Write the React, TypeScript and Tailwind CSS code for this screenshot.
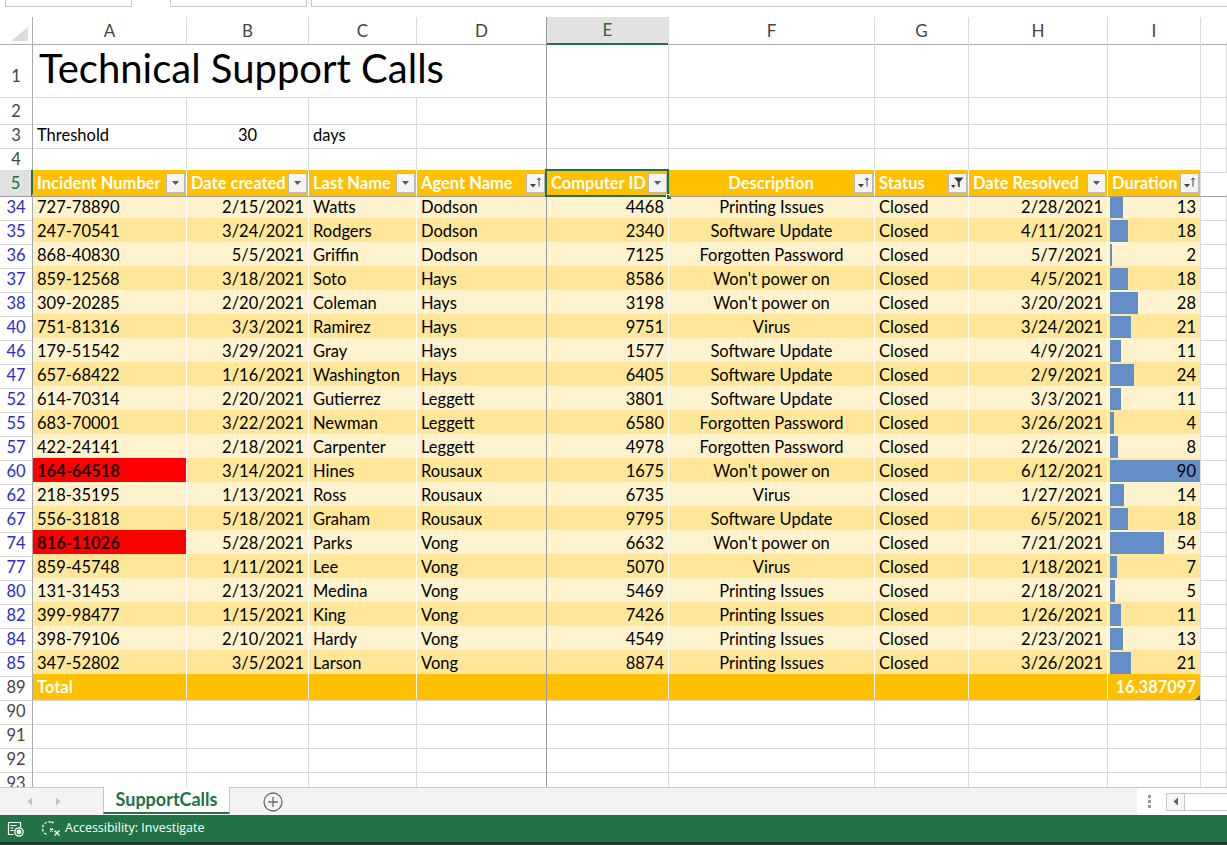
import { clsx } from 'clsx'

type Call = {
  n: number
  id: string
  created: string
  last: string
  agent: string
  comp: number
  desc: string
  resolved: string
  dur: number
  flag?: boolean
}

const CALLS: Call[] = [
  { n: 34, id: '727-78890', created: '2/15/2021', last: 'Watts', agent: 'Dodson', comp: 4468, desc: 'Printing Issues', resolved: '2/28/2021', dur: 13 },
  { n: 35, id: '247-70541', created: '3/24/2021', last: 'Rodgers', agent: 'Dodson', comp: 2340, desc: 'Software Update', resolved: '4/11/2021', dur: 18 },
  { n: 36, id: '868-40830', created: '5/5/2021', last: 'Griffin', agent: 'Dodson', comp: 7125, desc: 'Forgotten Password', resolved: '5/7/2021', dur: 2 },
  { n: 37, id: '859-12568', created: '3/18/2021', last: 'Soto', agent: 'Hays', comp: 8586, desc: "Won't power on", resolved: '4/5/2021', dur: 18 },
  { n: 38, id: '309-20285', created: '2/20/2021', last: 'Coleman', agent: 'Hays', comp: 3198, desc: "Won't power on", resolved: '3/20/2021', dur: 28 },
  { n: 40, id: '751-81316', created: '3/3/2021', last: 'Ramirez', agent: 'Hays', comp: 9751, desc: 'Virus', resolved: '3/24/2021', dur: 21 },
  { n: 46, id: '179-51542', created: '3/29/2021', last: 'Gray', agent: 'Hays', comp: 1577, desc: 'Software Update', resolved: '4/9/2021', dur: 11 },
  { n: 47, id: '657-68422', created: '1/16/2021', last: 'Washington', agent: 'Hays', comp: 6405, desc: 'Software Update', resolved: '2/9/2021', dur: 24 },
  { n: 52, id: '614-70314', created: '2/20/2021', last: 'Gutierrez', agent: 'Leggett', comp: 3801, desc: 'Software Update', resolved: '3/3/2021', dur: 11 },
  { n: 55, id: '683-70001', created: '3/22/2021', last: 'Newman', agent: 'Leggett', comp: 6580, desc: 'Forgotten Password', resolved: '3/26/2021', dur: 4 },
  { n: 57, id: '422-24141', created: '2/18/2021', last: 'Carpenter', agent: 'Leggett', comp: 4978, desc: 'Forgotten Password', resolved: '2/26/2021', dur: 8 },
  { n: 60, id: '164-64518', created: '3/14/2021', last: 'Hines', agent: 'Rousaux', comp: 1675, desc: "Won't power on", resolved: '6/12/2021', dur: 90, flag: true },
  { n: 62, id: '218-35195', created: '1/13/2021', last: 'Ross', agent: 'Rousaux', comp: 6735, desc: 'Virus', resolved: '1/27/2021', dur: 14 },
  { n: 67, id: '556-31818', created: '5/18/2021', last: 'Graham', agent: 'Rousaux', comp: 9795, desc: 'Software Update', resolved: '6/5/2021', dur: 18 },
  { n: 74, id: '816-11026', created: '5/28/2021', last: 'Parks', agent: 'Vong', comp: 6632, desc: "Won't power on", resolved: '7/21/2021', dur: 54, flag: true },
  { n: 77, id: '859-45748', created: '1/11/2021', last: 'Lee', agent: 'Vong', comp: 5070, desc: 'Virus', resolved: '1/18/2021', dur: 7 },
  { n: 80, id: '131-31453', created: '2/13/2021', last: 'Medina', agent: 'Vong', comp: 5469, desc: 'Printing Issues', resolved: '2/18/2021', dur: 5 },
  { n: 82, id: '399-98477', created: '1/15/2021', last: 'King', agent: 'Vong', comp: 7426, desc: 'Printing Issues', resolved: '1/26/2021', dur: 11 },
  { n: 84, id: '398-79106', created: '2/10/2021', last: 'Hardy', agent: 'Vong', comp: 4549, desc: 'Printing Issues', resolved: '2/23/2021', dur: 13 },
  { n: 85, id: '347-52802', created: '3/5/2021', last: 'Larson', agent: 'Vong', comp: 8874, desc: 'Printing Issues', resolved: '3/26/2021', dur: 21 },
]

const GRID = 'grid grid-cols-[33px_154px_122px_108px_130px_122px_206px_94px_139px_93px_1fr]'
const LETTERS = ['A', 'B', 'C', 'D', 'E', 'F', 'G', 'H', 'I', '']

// cell border helpers
const CELL = 'flex min-w-0 items-center whitespace-nowrap border-b border-r px-[4px] pt-px'
const GRID_B = 'border-b-[#dadada]'
const GRID_R = 'border-r-[#dadada]'
const FREEZE_R = 'border-r-[#9c9c9c]'

function RowHead({ n, blue = false, active = false, bottom = false }: { n: number; blue?: boolean; active?: boolean; bottom?: boolean }) {
  return (
    <div
      className={clsx(
        'flex justify-center border-b border-r text-[16.5px]',
        bottom ? 'items-end pb-[8px]' : 'items-center pt-px',
        active ? 'border-r-2 border-r-[#217346] border-b-[#9c9c9c] bg-[#e1e1e1] text-[#1e6b3f]' : 'border-r-[#ababab] border-b-[#dadada]',
        !active && (blue ? 'text-[#2b2bd4]' : 'text-[#444]'),
      )}
    >
      {n}
    </div>
  )
}

function Blank({ col }: { col: number }) {
  return <div className={clsx('border-b border-r', GRID_B, col === 3 ? FREEZE_R : GRID_R)} />
}

function EmptyRow({ n }: { n: number }) {
  return (
    <div className={clsx(GRID, 'h-6')}>
      <RowHead n={n} />
      {LETTERS.map((_, i) => (
        <Blank key={i} col={i} />
      ))}
    </div>
  )
}

function DropIcon() {
  return (
    <svg width="9" height="6" viewBox="0 0 9 6">
      <path d="M1 1h7L4.5 5z" fill="#595959" />
    </svg>
  )
}

function SortIcon() {
  return (
    <svg width="15" height="15" viewBox="0 0 15 15">
      <path d="M2 9h6l-3 3.5z" fill="#444" />
      <path d="M11 3v8.5M9.3 4.8L11 3l1.7 1.8" stroke="#444" strokeWidth="1" fill="none" />
    </svg>
  )
}

function FunnelIcon() {
  return (
    <svg width="15" height="15" viewBox="0 0 15 15">
      <path d="M4 2.5h9.5l-3.8 4.6v5.4L7.8 11.3V7.1z" fill="#3a3a3a" />
      <path d="M1 10h4.5L3.25 13z" fill="#3a3a3a" />
    </svg>
  )
}

function FilterBtn({ kind = 'drop' }: { kind?: 'drop' | 'sort' | 'filter' }) {
  return (
    <span className="flex h-[20px] w-[19px] shrink-0 items-center justify-center border border-[#b9b9b9] bg-[#f4f4f4]">
      {kind === 'drop' && <DropIcon />}
      {kind === 'sort' && <SortIcon />}
      {kind === 'filter' && <FunnelIcon />}
    </span>
  )
}

function HeadCell({ label, kind, center = false, right = 'border-r-white', selected = false }: { label: string; kind?: 'drop' | 'sort' | 'filter'; center?: boolean; right?: string; selected?: boolean }) {
  return (
    <div className={clsx('relative grid items-center border-b border-r border-b-[#9c9c9c] bg-[#ffc000] pl-[4px] pr-[1px] text-[16.5px] font-bold whitespace-nowrap text-white', right)}>
      <span className={clsx('col-start-1 row-start-1 pt-px', center && 'justify-self-center pr-[4px]')}>{label}</span>
      <span className="col-start-1 row-start-1 justify-self-end">
        <FilterBtn kind={kind} />
      </span>
      {selected && (
        <>
          <div className="pointer-events-none absolute -top-px -bottom-px -left-[2px] -right-px border-2 border-[#217346]" />
          <div className="absolute -right-[4px] -bottom-[4px] h-[6px] w-[6px] border border-white bg-[#217346]" />
        </>
      )}
    </div>
  )
}

function DataRow({ r, i }: { r: Call; i: number }) {
  const bg = i % 2 === 0 ? 'bg-[#fff2cc]' : 'bg-[#ffe699]'
  const cell = clsx(CELL, 'border-b-white text-[16.5px]')
  return (
    <div className={clsx(GRID, 'h-6')}>
      <RowHead n={r.n} blue />
      <div className={clsx(cell, 'border-r-white', r.flag ? 'bg-[#ff0000] font-bold text-[#1a0000]' : clsx(bg, 'text-black'))}>{r.id}</div>
      <div className={clsx(cell, 'justify-end border-r-white text-black', bg)}>{r.created}</div>
      <div className={clsx(cell, 'border-r-white text-black', bg)}>{r.last}</div>
      <div className={clsx(cell, FREEZE_R, 'text-black', bg)}>{r.agent}</div>
      <div className={clsx(cell, 'justify-end border-r-white text-black', bg)}>{r.comp}</div>
      <div className={clsx(cell, 'justify-center border-r-white text-black', bg)}>{r.desc}</div>
      <div className={clsx(cell, 'border-r-white text-black', bg)}>Closed</div>
      <div className={clsx(cell, 'justify-end border-r-white text-black', bg)}>{r.resolved}</div>
      <div className={clsx('grid border-b border-r border-b-white text-[16.5px] text-black', GRID_R, bg)}>
        <div className="col-start-1 row-start-1 my-[2px] ml-[2px] bg-[#638ec6]" style={{ width: r.dur }} />
        <span className="col-start-1 row-start-1 self-center justify-self-end pt-px pr-[4px]">{r.dur}</span>
      </div>
      <Blank col={9} />
    </div>
  )
}

function SheetViewIcon() {
  return (
    <svg width="18" height="16" viewBox="0 0 18 16" fill="none" stroke="white" strokeWidth="1.2">
      <path d="M1.5 1.5h12v5" />
      <path d="M1.5 1.5v12h5" />
      <path d="M3.5 4.5h6M3.5 7h3M3.5 9.5h3" />
      <circle cx="12" cy="11" r="4.2" />
      <circle cx="12" cy="11" r="1.8" fill="white" />
    </svg>
  )
}

function AccessIcon() {
  return (
    <svg width="20" height="18" viewBox="0 0 20 18" fill="none" stroke="white" strokeWidth="1.3">
      <path d="M9 2.2A6.5 6.5 0 0 0 5 14.6" strokeDasharray="2.6 1.6" />
      <circle cx="10.5" cy="2.5" r="1.1" fill="white" stroke="none" />
      <path d="M8 8.5l3 3M11 8.5l-3 3" />
      <path d="M12.5 10.5l5 5M17.5 10.5l-5 5" />
    </svg>
  )
}

export default function App() {
  return (
    <div className="flex h-[845px] w-[1227px] flex-col overflow-hidden bg-white font-['Lato','Liberation_Sans',sans-serif]">
      {/* ── formula bar remnants ───────────────── */}
      <div className="flex h-[17px] shrink-0 items-start">
        <div className="ml-[5px] h-[7px] w-[127px] border-x border-b border-[#c6c6c6]" />
        <div className="ml-[38px] h-[7px] w-[137px] border-x border-b border-[#c6c6c6]" />
        <div className="ml-[4px] h-[7px] flex-1 border-l border-b border-[#c6c6c6]" />
      </div>

      {/* ── sheet ───────────────────────────────── */}
      <div className="h-[770px] shrink-0 overflow-hidden">
        {/* column letters */}
        <div className={clsx(GRID, 'h-[25px]')}>
          <div className="flex items-end justify-end border-b border-r border-b-[#ababab] border-r-[#ababab] pr-[3px] pb-[3px]">
            <svg width="18" height="14" viewBox="0 0 18 14">
              <path d="M17 0v14H0z" fill="#dcdcdc" />
            </svg>
          </div>
          {LETTERS.map((l, i) => (
            <div
              key={i}
              className={clsx(
                'flex items-center justify-center border-r text-[17px]',
                l === 'E' ? 'border-b-2 border-b-[#217346] bg-[#e1e1e1] text-[#1e6b3f]' : 'border-b border-b-[#ababab] text-[#444]',
                i === 3 ? FREEZE_R : GRID_R,
                i === 9 && 'border-r-0',
              )}
            >
              {l}
            </div>
          ))}
        </div>

        {/* row 1: title */}
        <div className={clsx(GRID, 'h-14')}>
          <RowHead n={1} bottom />
          <div className={clsx('col-span-4 flex items-end border-b border-r pb-[9px] pl-[6px] text-[40px] leading-none whitespace-nowrap text-black', GRID_B, FREEZE_R)}>
            Technical Support Calls
          </div>
          {[4, 5, 6, 7, 8, 9].map((c) => (
            <Blank key={c} col={c} />
          ))}
        </div>

        <EmptyRow n={2} />

        {/* row 3: threshold */}
        <div className={clsx(GRID, 'h-6')}>
          <RowHead n={3} />
          <div className={clsx(CELL, GRID_B, GRID_R, 'text-[16.5px] text-black')}>Threshold</div>
          <div className={clsx(CELL, GRID_B, GRID_R, 'justify-center text-[16.5px] text-black')}>30</div>
          <div className={clsx(CELL, GRID_B, GRID_R, 'text-[16.5px] text-black')}>days</div>
          {[3, 4, 5, 6, 7, 8, 9].map((c) => (
            <Blank key={c} col={c} />
          ))}
        </div>

        <EmptyRow n={4} />

        {/* row 5: table header */}
        <div className={clsx(GRID, 'h-6')}>
          <RowHead n={5} active />
          <HeadCell label="Incident Number" />
          <HeadCell label="Date created" />
          <HeadCell label="Last Name" />
          <HeadCell label="Agent Name" kind="sort" right={FREEZE_R} />
          <HeadCell label="Computer ID" selected />
          <HeadCell label="Description" kind="sort" center />
          <HeadCell label="Status" kind="filter" />
          <HeadCell label="Date Resolved" />
          <HeadCell label="Duration" kind="sort" right={GRID_R} />
          <div className="border-b border-b-[#9c9c9c]" />
        </div>

        {CALLS.map((r, i) => (
          <DataRow key={r.n} r={r} i={i} />
        ))}

        {/* row 89: total */}
        <div className={clsx(GRID, 'h-6')}>
          <RowHead n={89} />
          <div className={clsx(CELL, GRID_B, 'border-r-white bg-[#ffc000] text-[16.5px] font-bold text-white')}>Total</div>
          <div className={clsx('border-b border-r border-r-white bg-[#ffc000]', GRID_B)} />
          <div className={clsx('border-b border-r border-r-white bg-[#ffc000]', GRID_B)} />
          <div className={clsx('border-b border-r bg-[#ffc000]', GRID_B, FREEZE_R)} />
          <div className={clsx('border-b border-r border-r-white bg-[#ffc000]', GRID_B)} />
          <div className={clsx('border-b border-r border-r-white bg-[#ffc000]', GRID_B)} />
          <div className={clsx('border-b border-r border-r-white bg-[#ffc000]', GRID_B)} />
          <div className={clsx('border-b border-r border-r-white bg-[#ffc000]', GRID_B)} />
          <div className={clsx('grid border-b border-r bg-[#ffc000] text-[16.5px] font-bold text-white', GRID_B, GRID_R)}>
            <span className="col-start-1 row-start-1 self-center justify-self-end pt-px pr-[4px]">16.387097</span>
            <svg className="col-start-1 row-start-1 self-end justify-self-end" width="5" height="5" viewBox="0 0 5 5">
              <path d="M5 0v5H0z" fill="#2f4d8a" />
            </svg>
          </div>
          <Blank col={9} />
        </div>

        <EmptyRow n={90} />
        <EmptyRow n={91} />
        <EmptyRow n={92} />
        <EmptyRow n={93} />
      </div>

      {/* ── sheet tabs ──────────────────────────── */}
      <div className="flex h-[28px] shrink-0 border-t border-t-[#c6c6c6] bg-[#f3f3f3]">
        <div className="flex w-[103px] items-center gap-[22px] pl-[27px]">
          <svg width="6" height="9" viewBox="0 0 6 9">
            <path d="M5 0.5v8L0.5 4.5z" fill="#c4c4c4" />
          </svg>
          <svg width="6" height="9" viewBox="0 0 6 9">
            <path d="M1 0.5v8L5.5 4.5z" fill="#c4c4c4" />
          </svg>
        </div>
        <div className="-mt-px flex h-[27px] w-[127px] items-center justify-center border-x border-b-2 border-x-[#c6c6c6] border-b-[#217346] bg-white text-[18px] font-bold text-[#217346]">
          SupportCalls
        </div>
        <div className="ml-[33px] flex items-center">
          <svg width="20" height="20" viewBox="0 0 20 20" fill="none" stroke="#6b6b6b" strokeWidth="1.3">
            <circle cx="10" cy="10" r="9" />
            <path d="M10 5v10M5 10h10" />
          </svg>
        </div>
        <div className="flex-1" />
        <div className="flex w-[90px] items-center bg-white">
          <div className="ml-[11px] flex flex-col gap-[2px]">
            <span className="h-[3px] w-[3px] bg-[#9a9a9a]" />
            <span className="h-[3px] w-[3px] bg-[#9a9a9a]" />
            <span className="h-[3px] w-[3px] bg-[#9a9a9a]" />
          </div>
          <div className="ml-[15px] flex h-[18px] w-[19px] items-center justify-center border border-[#c6c6c6] bg-[#f7f7f7]">
            <svg width="6" height="9" viewBox="0 0 6 9">
              <path d="M5 0.5v8L0.5 4.5z" fill="#606060" />
            </svg>
          </div>
          <div className="h-[18px] flex-1 border-y border-[#c6c6c6]" />
        </div>
      </div>

      {/* ── status bar ─────────────────────────── */}
      <div className="flex h-[27px] shrink-0 items-center bg-[#217346] font-['Open_Sans',sans-serif] text-[12.5px] text-white">
        <span className="ml-[7px] flex">
          <SheetViewIcon />
        </span>
        <span className="ml-[17px] flex">
          <AccessIcon />
        </span>
        <span className="ml-[3px]">Accessibility: Investigate</span>
      </div>
      <div className="h-[3px] shrink-0 bg-[#1d3b2a]" />
    </div>
  )
}
